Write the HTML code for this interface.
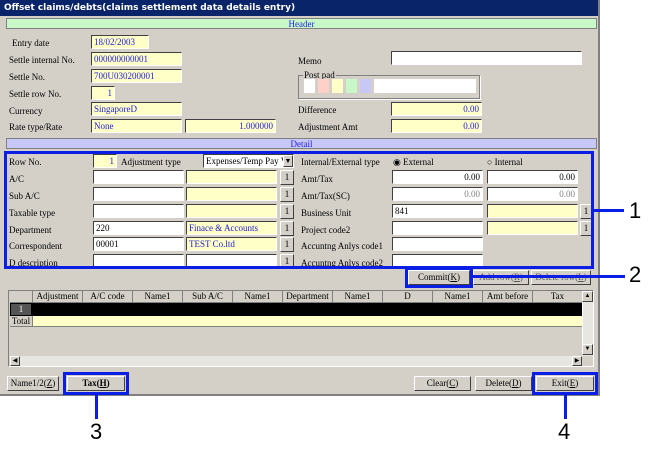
<!DOCTYPE html>
<html><head><meta charset="utf-8"><style>
*{margin:0;padding:0;box-sizing:border-box}
body{width:653px;height:449px;background:#fff;position:relative;overflow:hidden;font-family:"Liberation Serif",serif;font-size:9px;color:#000}
.a{position:absolute}
.win{left:0;top:0;width:600px;height:396px;background:#d4d0c8;border-right:2px solid #808080;border-bottom:2px solid #808080}
.title{left:0;top:0;width:598px;height:16px;background:#0a246a;color:#fff;font-family:"DejaVu Sans",sans-serif;font-weight:bold;font-size:9px;line-height:16px;padding-left:4px}
.bar{height:11px;font-size:9px;line-height:10px;color:#2020e0;text-align:center;border:1px solid #808080}
.lb{font-size:9px;line-height:10px;white-space:nowrap}
.in{background:#fff;border-top:1px solid #404040;border-left:1px solid #404040;border-bottom:1px solid #fff;border-right:1px solid #fff;height:14px;font-size:9px;line-height:12px;padding:0 2px;white-space:nowrap;overflow:hidden}
.y{background:#ffffc8}
.bl{color:#2020d0}
.r{text-align:right}
.btn{background:#d4d0c8;border:1px solid #fff;border-right-color:#404040;border-bottom-color:#404040;text-align:center;font-size:9px;line-height:12px;height:15px}
.bx{border:3px solid #0a1ee6}
.ln{background:#0a1ee6}
.num{font-family:"Liberation Sans",sans-serif;font-size:22px;line-height:22px}
.gh{border-right:1px solid #808080;border-bottom:1px solid #808080;background:#d4d0c8;text-align:center;font-size:9px;line-height:11px;height:12px;top:0}
</style></head><body>
<div class="a win"></div>
<div class="a title">Offset claims/debts(claims settlement data details entry)</div>
<div class="a bar" style="left:6px;top:18px;width:591px;background:#c8f8c8">Header</div>

<div class="a lb" style="left:12px;top:38px">Entry date</div>
<div class="a in y bl" style="left:91px;top:35px;width:58px">18/02/2003</div>
<div class="a lb" style="left:9px;top:55px">Settle internal No.</div>
<div class="a in y bl" style="left:91px;top:52px;width:91px">000000000001</div>
<div class="a lb" style="left:9px;top:72px">Settle No.</div>
<div class="a in y bl" style="left:91px;top:69px;width:91px">700U030200001</div>
<div class="a lb" style="left:9px;top:89px">Settle row No.</div>
<div class="a in y bl r" style="left:91px;top:86px;width:24px">1</div>
<div class="a lb" style="left:9px;top:106px">Currency</div>
<div class="a in y bl" style="left:91px;top:102px;width:91px">SingaporeD</div>
<div class="a lb" style="left:9px;top:122px">Rate type/Rate</div>
<div class="a in y bl" style="left:91px;top:119px;width:91px">None</div>
<div class="a in y bl r" style="left:185px;top:119px;width:91px">1.000000</div>

<div class="a lb" style="left:298px;top:56px">Memo</div>
<div class="a in" style="left:391px;top:51px;width:191px"></div>
<div class="a" style="left:298px;top:75px;width:182px;height:24px;border:1px solid #808080;box-shadow:1px 1px 0 #fff"></div>
<div class="a lb" style="left:303px;top:70px;background:#d4d0c8;padding:0 1px">Post pad</div>
<div class="a" style="left:304px;top:79px;width:11px;height:14px;background:#fff"></div>
<div class="a" style="left:318px;top:79px;width:11px;height:14px;background:#ffd0c8"></div>
<div class="a" style="left:332px;top:79px;width:11px;height:14px;background:#ffffc8"></div>
<div class="a" style="left:346px;top:79px;width:11px;height:14px;background:#c8f8c8"></div>
<div class="a" style="left:360px;top:79px;width:11px;height:14px;background:#c8c8f8"></div>
<div class="a" style="left:374px;top:79px;width:102px;height:14px;background:#fff"></div>
<div class="a lb" style="left:298px;top:105px">Difference</div>
<div class="a in y bl r" style="left:391px;top:102px;width:91px">0.00</div>
<div class="a lb" style="left:298px;top:122px">Adjustment Amt</div>
<div class="a in y bl r" style="left:391px;top:119px;width:91px">0.00</div>

<div class="a bar" style="left:6px;top:138px;width:591px;background:#c8c8f8">Detail</div>

<div class="a lb" style="left:9px;top:157px">Row No.</div>
<div class="a in y bl r" style="left:93px;top:154px;width:24px">1</div>
<div class="a lb" style="left:121px;top:157px">Adjustment type</div>
<div class="a in" style="left:203px;top:154px;width:91px;padding-right:12px">Expenses/Temp Pay V</div>
<div class="a btn" style="left:283px;top:155px;width:10px;height:12px;font-size:7px;line-height:10px">▼</div>

<div class="a lb" style="left:9px;top:174px">A/C</div>
<div class="a lb" style="left:9px;top:191px">Sub A/C</div>
<div class="a lb" style="left:9px;top:208px">Taxable type</div>
<div class="a lb" style="left:9px;top:225px">Department</div>
<div class="a lb" style="left:9px;top:241px">Correspondent</div>
<div class="a lb" style="left:9px;top:258px">D description</div>

<div class="a in" style="left:93px;top:170px;width:91px"></div>
<div class="a in y" style="left:186px;top:170px;width:91px"></div>
<div class="a btn" style="left:280px;top:170px;width:14px">1</div>
<div class="a in" style="left:93px;top:187px;width:91px"></div>
<div class="a in y" style="left:186px;top:187px;width:91px"></div>
<div class="a btn" style="left:280px;top:187px;width:14px">1</div>
<div class="a in" style="left:93px;top:204px;width:91px"></div>
<div class="a in y" style="left:186px;top:204px;width:91px"></div>
<div class="a btn" style="left:280px;top:204px;width:14px">1</div>
<div class="a in" style="left:93px;top:221px;width:91px">220</div>
<div class="a in y bl" style="left:186px;top:221px;width:91px">Finace &amp; Accounts</div>
<div class="a btn" style="left:280px;top:221px;width:14px">1</div>
<div class="a in" style="left:93px;top:237px;width:91px">00001</div>
<div class="a in y bl" style="left:186px;top:237px;width:91px">TEST Co.ltd</div>
<div class="a btn" style="left:280px;top:237px;width:14px">1</div>
<div class="a in" style="left:93px;top:254px;width:91px"></div>
<div class="a in" style="left:186px;top:254px;width:91px"></div>
<div class="a btn" style="left:280px;top:254px;width:14px">1</div>

<div class="a lb" style="left:301px;top:157px">Internal/External type</div>
<div class="a lb" style="left:393px;top:157px">◉ External</div>
<div class="a lb" style="left:487px;top:157px">○ Internal</div>
<div class="a lb" style="left:301px;top:174px">Amt/Tax</div>
<div class="a in r" style="left:392px;top:170px;width:91px">0.00</div>
<div class="a in r" style="left:487px;top:170px;width:91px">0.00</div>
<div class="a lb" style="left:301px;top:191px">Amt/Tax(SC)</div>
<div class="a in r" style="left:392px;top:187px;width:91px;color:#808080">0.00</div>
<div class="a in r" style="left:487px;top:187px;width:91px;color:#808080">0.00</div>
<div class="a lb" style="left:301px;top:208px">Business Unit</div>
<div class="a in" style="left:392px;top:204px;width:91px">841</div>
<div class="a in y" style="left:487px;top:204px;width:91px"></div>
<div class="a btn" style="left:580px;top:204px;width:12px">1</div>
<div class="a lb" style="left:301px;top:225px">Project code2</div>
<div class="a in" style="left:392px;top:221px;width:91px"></div>
<div class="a in y" style="left:487px;top:221px;width:91px"></div>
<div class="a btn" style="left:580px;top:221px;width:12px">1</div>
<div class="a lb" style="left:301px;top:241px">Accuntng Anlys code1</div>
<div class="a in" style="left:392px;top:237px;width:91px"></div>
<div class="a lb" style="left:301px;top:258px">Accuntng Anlys code2</div>
<div class="a in" style="left:392px;top:254px;width:91px"></div>

<div class="a bx" style="left:4px;top:151px;width:590px;height:118px"></div>
<div class="a ln" style="left:594px;top:209px;width:30px;height:3px"></div>
<div class="a num" style="left:629px;top:200px">1</div>

<div class="a btn" style="left:408px;top:270px;width:62px">Commit(<u>K</u>)</div>
<div class="a btn" style="left:473px;top:270px;width:56px;color:#555">Add row(<u>R</u>)</div>
<div class="a btn" style="left:531px;top:270px;width:60px;color:#555">Delete row(<u>L</u>)</div>
<div class="a bx" style="left:405px;top:267px;width:68px;height:21px"></div>
<div class="a ln" style="left:473px;top:275px;width:152px;height:3px"></div>
<div class="a num" style="left:629px;top:264px">2</div>

<div class="a" style="left:8px;top:290px;width:586px;height:77px;border:1px solid #808080;border-right-color:#fff;border-bottom-color:#fff"></div>
<div class="a" style="left:10px;top:291px;width:573px;height:36px;background:#d4d0c8">
 <div class="a gh" style="left:0;width:23px"></div>
 <div class="a gh" style="left:23px;width:50px">Adjustment</div>
 <div class="a gh" style="left:73px;width:50px">A/C code</div>
 <div class="a gh" style="left:123px;width:50px">Name1</div>
 <div class="a gh" style="left:173px;width:50px">Sub A/C</div>
 <div class="a gh" style="left:223px;width:50px">Name1</div>
 <div class="a gh" style="left:273px;width:50px">Department</div>
 <div class="a gh" style="left:323px;width:50px">Name1</div>
 <div class="a gh" style="left:373px;width:50px">D</div>
 <div class="a gh" style="left:423px;width:50px">Name1</div>
 <div class="a gh" style="left:473px;width:50px">Amt before</div>
 <div class="a gh" style="left:523px;width:50px">Tax</div>
 <div class="a" style="left:0;top:12px;width:573px;height:13px;background:#000"></div>
 <div class="a" style="left:1px;top:13px;width:20px;height:11px;background:#555;color:#fff;text-align:center;line-height:11px">1</div>
 <div class="a" style="left:23px;top:25px;width:550px;height:11px;background:#ffffc8;border-bottom:1px solid #808080"></div>
 <div class="a gh" style="left:0;top:25px;width:23px;height:11px">Total</div>
</div>
<div class="a" style="left:582px;top:291px;width:11px;height:65px;background:#e8e6e0;border-left:1px solid #fff"></div>
<div class="a btn" style="left:582px;top:291px;width:11px;height:11px;font-size:6px;line-height:9px">▲</div>
<div class="a btn" style="left:582px;top:344px;width:11px;height:11px;font-size:6px;line-height:9px">▼</div>
<div class="a" style="left:10px;top:356px;width:572px;height:10px;background:#e8e6e0"></div>
<div class="a btn" style="left:10px;top:356px;width:10px;height:10px;font-size:6px;line-height:8px">◀</div>
<div class="a btn" style="left:572px;top:356px;width:10px;height:10px;font-size:6px;line-height:8px">▶</div>

<div class="a btn" style="left:7px;top:376px;width:52px">Name1/2(<u>Z</u>)</div>
<div class="a btn" style="left:67px;top:376px;width:58px;font-weight:bold">Tax(<u>H</u>)</div>
<div class="a bx" style="left:63px;top:372px;width:66px;height:23px"></div>
<div class="a ln" style="left:95px;top:395px;width:3px;height:24px"></div>
<div class="a num" style="left:90px;top:421px">3</div>

<div class="a btn" style="left:414px;top:376px;width:57px">Clear(<u>C</u>)</div>
<div class="a btn" style="left:475px;top:376px;width:57px">Delete(<u>D</u>)</div>
<div class="a btn" style="left:536px;top:376px;width:58px">Exit(<u>E</u>)</div>
<div class="a bx" style="left:532px;top:372px;width:66px;height:23px"></div>
<div class="a ln" style="left:564px;top:395px;width:3px;height:24px"></div>
<div class="a num" style="left:558px;top:421px">4</div>
</body></html>
